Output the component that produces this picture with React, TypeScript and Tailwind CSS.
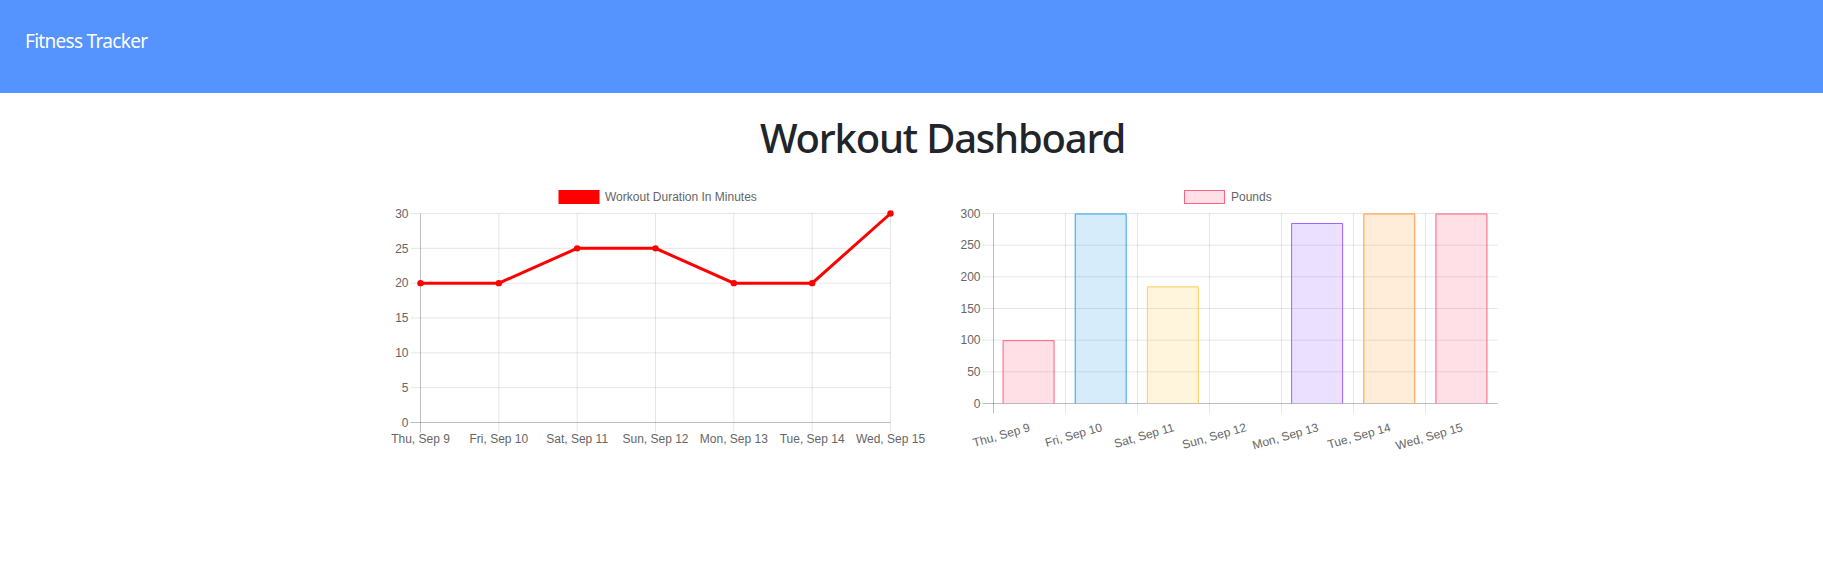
import React from "react";

const days = [
  "Thu, Sep 9",
  "Fri, Sep 10",
  "Sat, Sep 11",
  "Sun, Sep 12",
  "Mon, Sep 13",
  "Tue, Sep 14",
  "Wed, Sep 15",
];

const GRID = "rgba(0,0,0,0.1)";
const ZERO = "rgba(0,0,0,0.25)";
const TXT = "#666";
const FONT = "'Liberation Sans', Arial, Helvetica, sans-serif";

function LineChart() {
  const left = 420.5;
  const right = 890.5;
  const top = 213.5;
  const bottom = 422.5;
  const step = (right - left) / 6;
  const xs = days.map((_, i) => left + i * step);
  const y = (v: number) => bottom - (v / 30) * (bottom - top);
  const data = [20, 20, 25, 25, 20, 20, 30];
  const ticks = [0, 5, 10, 15, 20, 25, 30];
  const pts = data.map((v, i) => `${xs[i]},${y(v)}`).join(" ");
  return (
    <svg width={550} height={280} viewBox="380 180 550 280" className="block shrink-0" style={{ fontFamily: FONT }}>
      <rect x={559} y={190.5} width={40} height={13} fill="#ff0000" stroke="#ff0000" strokeWidth={1} />
      <text x={605} y={201} fontSize={12} fill={TXT}>Workout Duration In Minutes</text>
      {ticks.map((v) => (
        <line key={"h" + v} x1={410.5} x2={right} y1={y(v)} y2={y(v)} stroke={v === 0 ? ZERO : GRID} strokeWidth={1} />
      ))}
      {xs.map((x, i) => (
        <line key={"v" + i} x1={x} x2={x} y1={top} y2={bottom + 10} stroke={i === 0 ? ZERO : GRID} strokeWidth={1} />
      ))}
      {ticks.map((v) => (
        <text key={"yl" + v} x={408.5} y={y(v) + 4.2} fontSize={12} fill={TXT} textAnchor="end">
          {v}
        </text>
      ))}
      {xs.map((x, i) => (
        <text key={"xl" + i} x={x} y={443} fontSize={12} fill={TXT} textAnchor="middle">
          {days[i]}
        </text>
      ))}
      <polyline points={pts} fill="none" stroke="#ff0000" strokeWidth={3} strokeLinejoin="miter" />
      {data.map((v, i) => (
        <circle key={"p" + i} cx={xs[i]} cy={y(v)} r={3.2} fill="#ff0000" />
      ))}
    </svg>
  );
}

const barData = [100, 300, 185, 0, 285, 300, 300];
const barColors = [
  [255, 99, 132],
  [54, 162, 235],
  [255, 206, 86],
  [75, 192, 192],
  [153, 102, 255],
  [255, 159, 64],
  [255, 99, 132],
];

function BarChart() {
  const left = 992.5;
  const right = 1497.5;
  const top = 213.5;
  const bottom = 403.5;
  const cw = (right - left) / 7;
  const y = (v: number) => bottom - (v / 300) * (bottom - top);
  const ticks = [0, 50, 100, 150, 200, 250, 300];
  const bw = cw * 0.72;
  return (
    <svg width={555} height={280} viewBox="950 180 555 280" className="block shrink-0" style={{ fontFamily: FONT }}>
      <rect x={1184.5} y={190.5} width={40} height={13} fill="rgba(255,99,132,0.2)" stroke="rgb(255,99,132)" strokeWidth={1} />
      <text x={1231} y={201} fontSize={12} fill={TXT}>Pounds</text>
      {ticks.map((v) => (
        <line key={"h" + v} x1={982.5} x2={right} y1={y(v)} y2={y(v)} stroke={v === 0 ? ZERO : GRID} strokeWidth={1} />
      ))}
      {days.map((_, k) => {
        const x = Math.round(left + k * cw) + 0.5;
        return (
          <line key={"v" + k} x1={x} x2={x} y1={top} y2={bottom + 10} stroke={k === 0 ? ZERO : GRID} strokeWidth={1} />
        );
      })}
      {ticks.map((v) => (
        <text key={"yl" + v} x={980.5} y={y(v) + 4.2} fontSize={12} fill={TXT} textAnchor="end">
          {v}
        </text>
      ))}
      {barData.map((v, i) => {
        if (v === 0) return null;
        const c = barColors[i];
        const cx = left + (i + 0.5) * cw;
        const x1 = cx - bw / 2;
        const x2 = cx + bw / 2;
        const yt = y(v);
        return (
          <g key={"b" + i}>
            <rect x={x1} y={yt} width={bw} height={bottom - yt} fill={`rgba(${c[0]},${c[1]},${c[2]},0.2)`} />
            <path
              d={`M${x1 + 0.5},${bottom} L${x1 + 0.5},${yt + 0.5} L${x2 - 0.5},${yt + 0.5} L${x2 - 0.5},${bottom}`}
              fill="none"
              stroke={`rgb(${c[0]},${c[1]},${c[2]})`}
              strokeWidth={1}
            />
          </g>
        );
      })}
      {days.map((d, i) => {
        const cx = left + (i + 0.5) * cw;
        return (
          <text
            key={"xl" + i}
            transform={`translate(${cx + 1} 427) rotate(-16)`}
            fontSize={12}
            fill={TXT}
            textAnchor="end"
            dominantBaseline="central"
          >
            {d}
          </text>
        );
      })}
    </svg>
  );
}

export default function App() {
  return (
    <div className="min-h-[573px] bg-white">
      <nav className="h-[93px] bg-[#5593ff] pl-[25px] pt-[26px]">
        <span className="text-[19px] leading-[30px] tracking-[-0.7px] text-white font-['Noto_Sans',sans-serif]">
          Fitness Tracker
        </span>
      </nav>
      <main className="flex justify-center pl-[62px] pt-[21px]">
        <div className="w-[1125px]">
          <h1 className="text-center text-[40px] leading-[48px] tracking-[-1.2px] font-medium text-[#212529] font-['Noto_Sans',sans-serif]">
            Workout Dashboard
          </h1>
          <div className="mt-[18px] flex gap-5">
            <LineChart />
            <BarChart />
          </div>
        </div>
      </main>
    </div>
  );
}
